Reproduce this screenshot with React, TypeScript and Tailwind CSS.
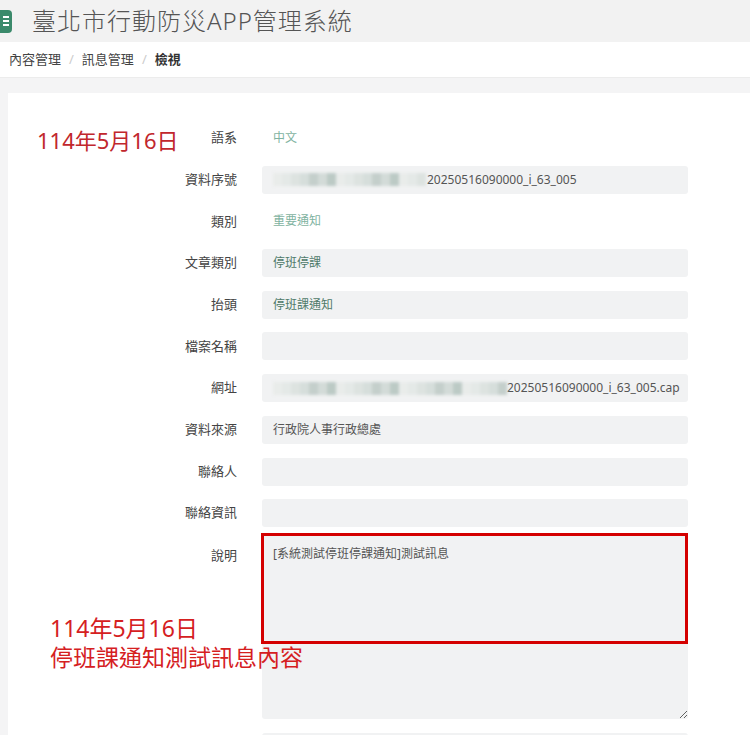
const font = "font-['Noto_Sans','Noto_Sans_CJK_TC',sans-serif]";

type Row = {
  label: string;
  value?: string;
  boxed: boolean;
  tone?: "green" | "light" | "grey";
  blur?: number;
};

const rows: Row[] = [
  { label: "語系", value: "中文", boxed: false, tone: "light" },
  { label: "資料序號", value: "20250516090000_i_63_005", boxed: true, tone: "grey", blur: 154 },
  { label: "類別", value: "重要通知", boxed: false, tone: "light" },
  { label: "文章類別", value: "停班停課", boxed: true, tone: "green" },
  { label: "抬頭", value: "停班課通知", boxed: true, tone: "green" },
  { label: "檔案名稱", boxed: true },
  { label: "網址", value: "20250516090000_i_63_005.cap", boxed: true, tone: "grey", blur: 234 },
  { label: "資料來源", value: "行政院人事行政總處", boxed: true, tone: "grey" },
  { label: "聯絡人", boxed: true },
  { label: "聯絡資訊", boxed: true },
];

const toneClass = {
  green: "text-[#4f7a6a]",
  light: "text-[#7fb3a1]",
  grey: "text-[#555]",
};

function Blurred({ width }: { width: number }) {
  // pixelated mosaic standing in for the masked part of the value
  const shades = ["#d3dbd8", "#e4e9e7", "#c4cfcb", "#e9ecea", "#d6dedb", "#bccac5", "#dde3e0"];
  const cells = Math.floor(width / 9);
  return (
    <span className="flex h-[13px] overflow-hidden blur-[1.5px]" style={{ width }}>
      {Array.from({ length: cells }).map((_, i) => (
        <span
          key={i}
          className="h-full w-[9px] shrink-0"
          style={{ background: shades[(i * 5 + 3) % shades.length] }}
        />
      ))}
    </span>
  );
}

function Field({ row }: { row: Row }) {
  return (
    <>
      <div className="flex h-[28px] items-center justify-end text-[13px] text-[#444]">{row.label}</div>
      {row.boxed ? (
        <div
          className={`flex h-[28px] items-center rounded-[3px] bg-[#f1f2f3] pl-[11px] text-[12px] ${
            row.tone ? toneClass[row.tone] : ""
          }`}
        >
          {row.blur ? <Blurred width={row.blur} /> : null}
          {row.value}
        </div>
      ) : (
        <div className={`flex h-[28px] items-center pl-[11px] text-[12px] ${row.tone ? toneClass[row.tone] : ""}`}>
          {row.value}
        </div>
      )}
    </>
  );
}

export default function App() {
  return (
    <div className={`${font} h-[735px] w-[750px] overflow-hidden bg-[#f4f4f5]`}>
      <header className="flex h-[42px] items-center gap-[20px] bg-[#f2f2f2]">
        <div className="-ml-[18px] flex h-[23px] w-[30px] items-center justify-end rounded-[4px] bg-[#3b8a6b] pr-[3px]">
          <div className="flex flex-col gap-[2px]">
            <span className="block h-[2px] w-[6px] bg-white" />
            <span className="block h-[2px] w-[6px] bg-white" />
            <span className="block h-[2px] w-[6px] bg-white" />
          </div>
        </div>
        <h1 className="text-[24px] font-light tracking-[1px] text-[#555]">臺北市行動防災APP管理系統</h1>
      </header>

      <nav className="flex h-[36px] items-center gap-[8px] border-b border-[#ececec] bg-white px-[9px] text-[13px] text-[#444]">
        <span>內容管理</span>
        <span className="text-[#ccc]">/</span>
        <span>訊息管理</span>
        <span className="text-[#ccc]">/</span>
        <span className="font-bold text-[#333]">檢視</span>
      </nav>

      <main className="pl-[8px] pt-[15px]">
        <section className="relative bg-white pb-[40px] pt-[31px]">
          <div className="grid grid-cols-[229px_426px] gap-x-[25px] gap-y-[13.7px]">
            {rows.map((row) => (
              <Field key={row.label} row={row} />
            ))}
            <div className="-mt-[7px] pt-[12px] text-right text-[13px] leading-[18px] text-[#444]">說明</div>
            <div className="relative -mt-[7px]">
              <textarea
                readOnly
                defaultValue="[系統測試停班停課通知]測試訊息"
                className="block h-[185px] w-full resize-y rounded-[3px] bg-[#f1f2f3] px-[11px] pt-[11px] text-[12px] text-[#555] outline-none"
              />
              <div className="pointer-events-none absolute -top-[1px] -left-[1px] right-0 h-[111px] border-[3px] border-[#d40000]" />
            </div>
            <div />
            <div className="h-[28px] rounded-[3px] bg-[#f1f2f3]" />
          </div>

          <p className="absolute left-[29px] top-[32px] text-[22px] leading-[30px] text-[#c1272d]">114年5月16日</p>
          <p className="absolute left-[42px] top-[521px] text-[23px] leading-[29px] text-[#d5201f]">
            114年5月16日
            <br />
            停班課通知測試訊息內容
          </p>
        </section>
      </main>
    </div>
  );
}
